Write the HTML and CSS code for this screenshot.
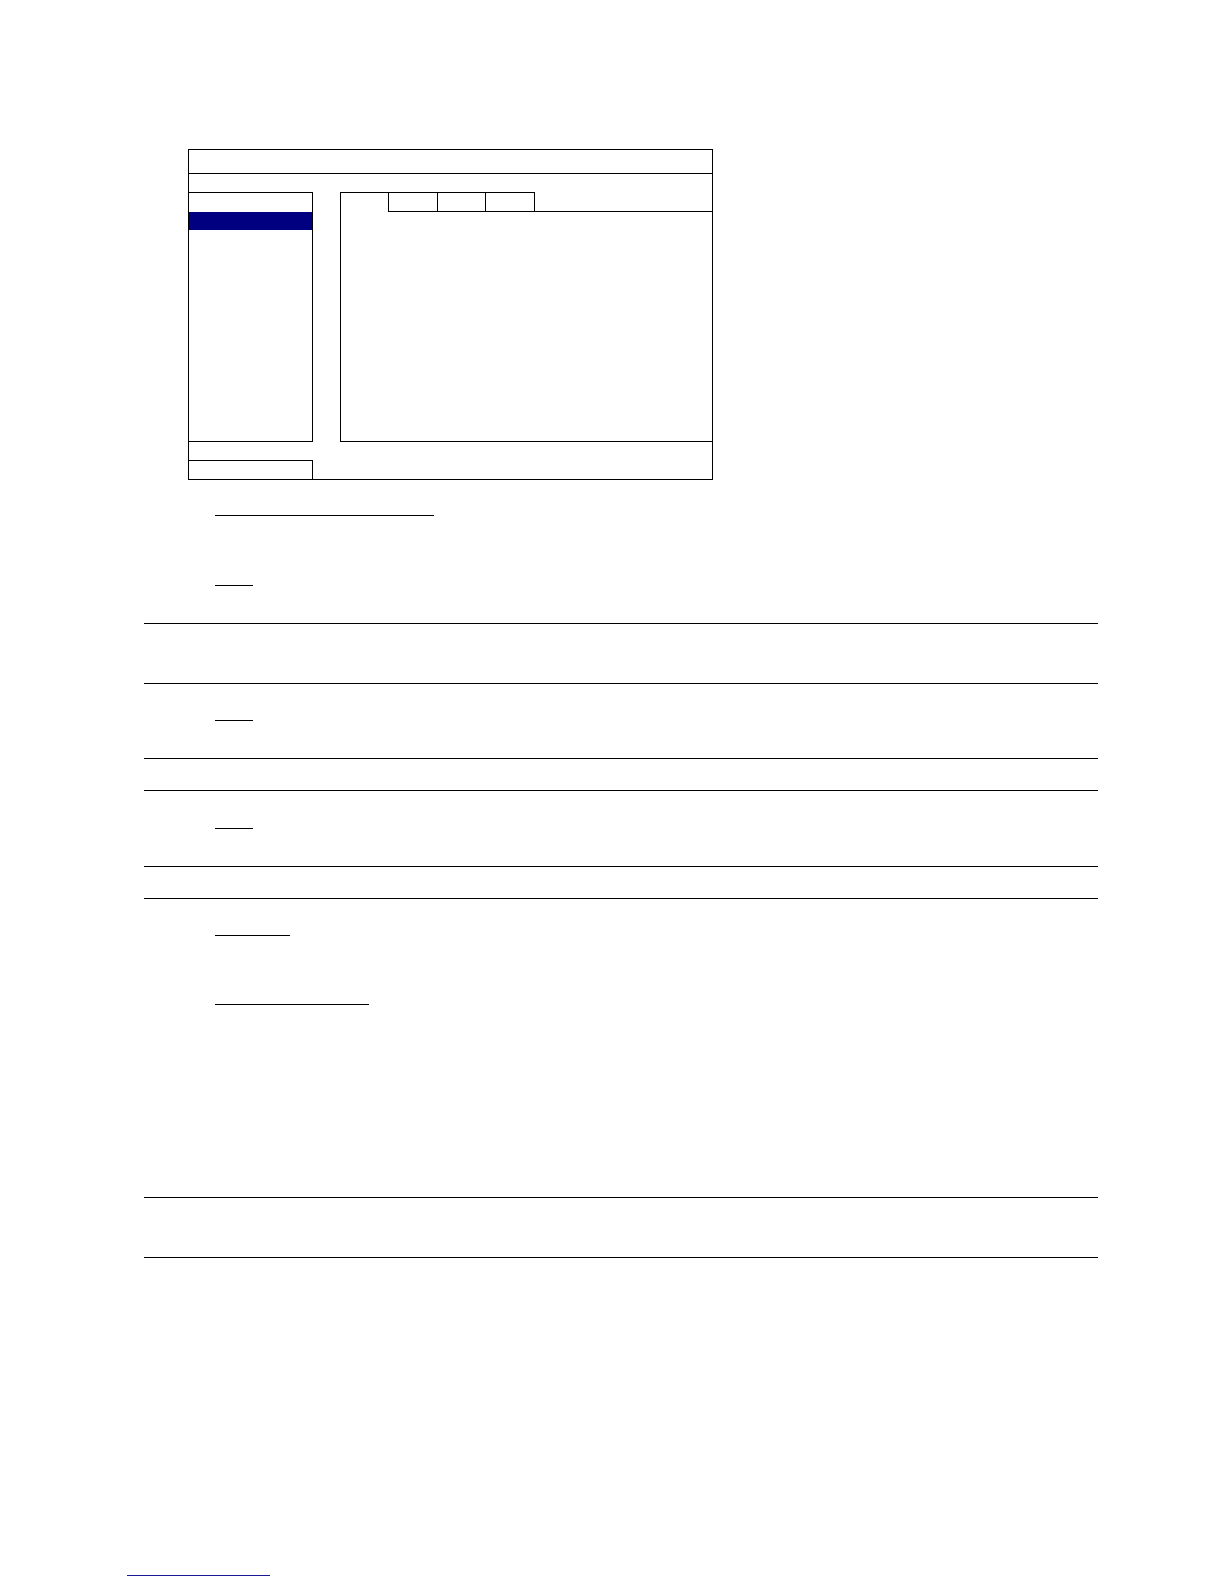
FILE: index.html
```html
<!DOCTYPE html>
<html lang="en">
<head>
<meta charset="utf-8">
<title>Menu</title>
<link rel="stylesheet" href="styles.css">
</head>
<body>
<div class="window">
  <div class="titlebar"></div>
  <div class="panels">
    <div class="menu">
      <div class="menu-item"></div>
      <div class="menu-item active"></div>
    </div>
    <div class="content">
      <div class="tabs">
        <div class="tab tab-active"></div>
        <div class="tab tab-a"></div>
        <div class="tab tab-b"></div>
        <div class="tab tab-c"></div>
        <div class="tab-fill"></div>
      </div>
      <div class="tab-body"></div>
    </div>
  </div>
  <div class="footer">
    <div class="footer-box"></div>
  </div>
</div>

<div class="uline u1"></div>
<div class="uline u2"></div>
<div class="rule r1"></div>
<div class="rule r2"></div>
<div class="uline u3"></div>
<div class="rule r3"></div>
<div class="rule r4"></div>
<div class="uline u4"></div>
<div class="rule r5"></div>
<div class="rule r6"></div>
<div class="uline u5"></div>
<div class="uline u6"></div>
<div class="rule r7"></div>
<div class="rule r8"></div>
<div class="link-line"></div>
</body>
</html>
```

FILE: styles.css
```css
html, body {
  margin: 0;
  padding: 0;
  background: #ffffff;
  font-family: "Liberation Sans", Arial, sans-serif;
}

body {
  width: 1224px;
  height: 1584px;
  overflow: hidden;
}

.window {
  margin: 149px 0 0 188px;
  width: 525px;
  height: 331px;
  box-sizing: border-box;
  border: 1px solid #000;
  display: flex;
  flex-direction: column;
}

.titlebar {
  height: 24px;
  box-sizing: border-box;
  border-bottom: 1px solid #000;
}

.panels {
  margin-top: 18px;
  height: 250px;
  display: flex;
}

.menu {
  width: 124px;
  box-sizing: border-box;
  border-top: 1px solid #000;
  border-right: 1px solid #000;
  border-bottom: 1px solid #000;
}

.menu-item {
  height: 19px;
}

.menu-item.active {
  height: 18px;
  background: #000080;
}

.content {
  flex: 1;
  margin-left: 27px;
  box-sizing: border-box;
  border-left: 1px solid #000;
  border-bottom: 1px solid #000;
  display: flex;
  flex-direction: column;
}

.tabs {
  height: 20px;
  display: flex;
}

.tab {
  height: 20px;
  box-sizing: border-box;
  border-top: 1px solid #000;
}

.tab-active {
  width: 47px;
}

.tab-a,
.tab-b,
.tab-c {
  border-left: 1px solid #000;
  border-bottom: 1px solid #000;
}

.tab-a {
  width: 49px;
}

.tab-b {
  width: 48px;
}

.tab-c {
  width: 50px;
  border-right: 1px solid #000;
}

.tab-fill {
  flex: 1;
  height: 20px;
  box-sizing: border-box;
  border-bottom: 1px solid #000;
}

.tab-body {
  flex: 1;
}

.footer {
  margin-top: 18px;
  height: 19px;
}

.footer-box {
  width: 124px;
  height: 19px;
  box-sizing: border-box;
  border-top: 1px solid #000;
  border-right: 1px solid #000;
}

.uline {
  margin-left: 215px;
  height: 0;
  border-top: 1px solid #000;
}

.rule {
  margin-left: 144px;
  width: 954px;
  height: 0;
  border-top: 1px solid #000;
}

.u1 { width: 219px; margin-top: 35px; }
.u2 { width: 38px; margin-top: 69px; }
.r1 { margin-top: 37px; }
.r2 { margin-top: 59px; }
.u3 { width: 38px; margin-top: 36px; }
.r3 { margin-top: 37px; }
.r4 { margin-top: 31px; }
.u4 { width: 38px; margin-top: 37px; }
.r5 { margin-top: 37px; }
.r6 { margin-top: 31px; }
.u5 { width: 75px; margin-top: 36px; }
.u6 { width: 154px; margin-top: 68px; }
.r7 { margin-top: 192px; }
.r8 { margin-top: 59px; }

.link-line {
  margin-top: 317px;
  margin-left: 127px;
  width: 143px;
  height: 0;
  border-top: 1px solid #1a1a99;
}
```
